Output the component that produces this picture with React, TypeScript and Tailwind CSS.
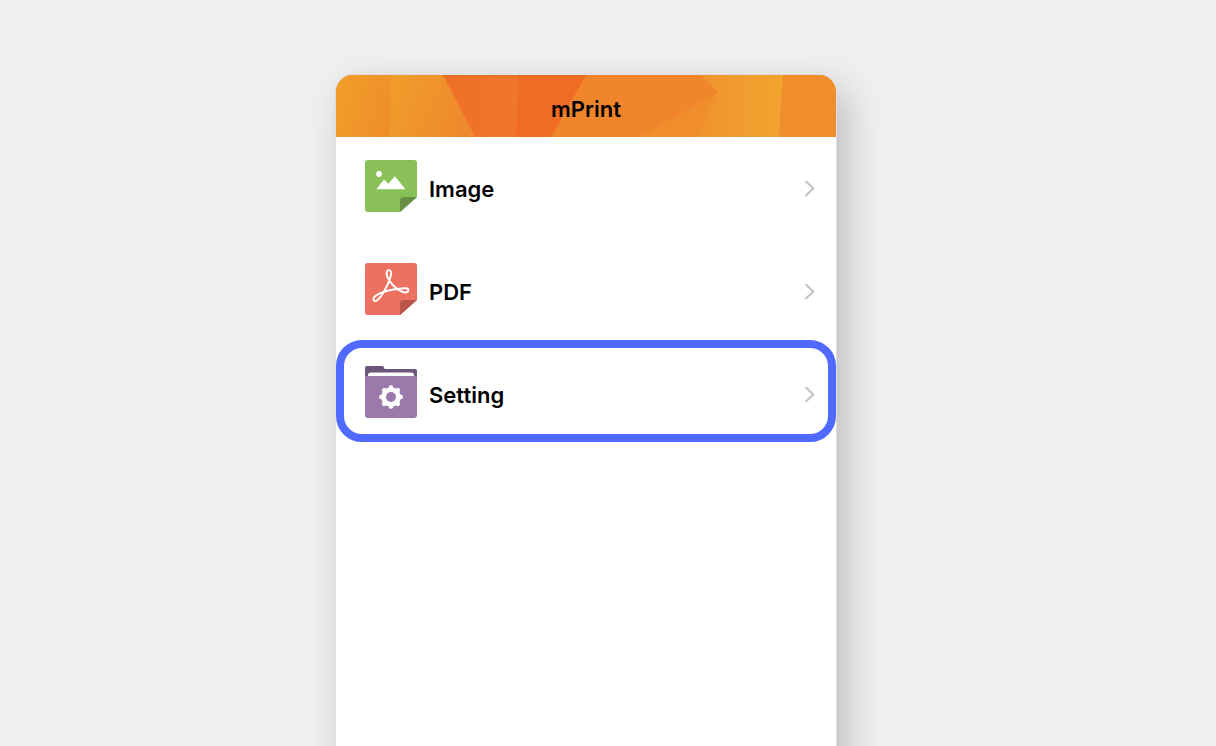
import type { ReactNode } from "react";

function HeaderArt() {
  return (
    <svg
      className="absolute inset-0 h-full w-full"
      viewBox="0 0 500 62"
      preserveAspectRatio="none"
      aria-hidden="true"
    >
      <defs>
        <linearGradient id="edge" x1="0" y1="0" x2="1" y2="0.3">
          <stop offset="0" stopColor="#f19f29" />
          <stop offset="1" stopColor="#f08f2a" />
        </linearGradient>
        <linearGradient id="amber" x1="0" y1="0" x2="1" y2="0.3">
          <stop offset="0" stopColor="#f09e2b" />
          <stop offset="1" stopColor="#ef8a2c" />
        </linearGradient>
        <linearGradient id="gold" x1="0" y1="0" x2="1" y2="0">
          <stop offset="0" stopColor="#f0932e" />
          <stop offset="1" stopColor="#f1a42f" />
        </linearGradient>
        <linearGradient id="flame" x1="0" y1="0" x2="1" y2="0">
          <stop offset="0" stopColor="#ef6f28" />
          <stop offset="1" stopColor="#f2762a" />
        </linearGradient>
      </defs>
      <rect width="500" height="62" fill="#f0852c" />
      <path d="M0 0H55L53 62H0Z" fill="url(#edge)" />
      <path d="M55 0H107L139 62H53Z" fill="url(#amber)" />
      <path d="M107 0H182L180 62H139Z" fill="url(#flame)" />
      <path d="M182 0H250L215 62H180Z" fill="#f06c25" />
      <path d="M382 17L304 62H362Z" fill="#f08e2e" />
      <path d="M365 0H447L443 62H361L382 17Z" fill="url(#gold)" />
      <path d="M447 0H500V62H443Z" fill="#f08e2c" />
    </svg>
  );
}

function ImageIcon() {
  return (
    <svg className="h-[52px] w-[52px]" viewBox="0 0 52 52" aria-hidden="true">
      <path d="M3 0H49Q52 0 52 3V37L35 52H3Q0 52 0 49V3Q0 0 3 0Z" fill="#89c057" />
      <path d="M52 37H39Q35 37 35 41V52Z" fill="#659044" />
      <circle cx="14" cy="14" r="2.9" fill="#fff" />
      <path d="M11.3 29.2L19 19.5L23.4 23.8L29.8 16.3L40.5 29.2Z" fill="#fff" />
    </svg>
  );
}

function PdfIcon() {
  return (
    <svg className="h-[52px] w-[52px]" viewBox="0 0 52 52" aria-hidden="true">
      <path d="M3 0H49Q52 0 52 3V37L35 52H3Q0 52 0 49V3Q0 0 3 0Z" fill="#ed7161" />
      <path d="M52 37H39Q35 37 35 41V52Z" fill="#b9574b" />
      <path
        d="M24 7.3C21.3 7.3 20.9 11 22.6 14.4C25.6 20.3 30.6 25.8 36.8 28.6C40.4 30.2 43.4 29.2 43.4 27.2C43.4 25 40 25 36 25.5C28.5 26.2 20.5 28 14.2 30.6C10 32.4 7.6 35.4 8.8 37.4C10.1 39.4 13.8 36.6 16.4 32.7C20.7 26.2 24 19.5 25.6 13.6C26.6 10 26.4 7.3 24 7.3Z"
        fill="none"
        stroke="#fff"
        strokeWidth="2"
        strokeLinejoin="round"
      />
    </svg>
  );
}

function SettingIcon() {
  return (
    <svg className="h-[52px] w-[52px]" viewBox="0 0 52 52" aria-hidden="true">
      <path d="M0 14V2Q0 0 2 0H17Q19 0 19.5 3H50Q52 3 52 5V14Z" fill="#6c567b" />
      <path d="M3 12V9Q3 6.5 6 6.5H46Q49 6.5 49 9V12Z" fill="#fff" />
      <path d="M0 12Q0 10 2 10H50Q52 10 52 12V49Q52 52 49 52H3Q0 52 0 49Z" fill="#9b7aab" />
      <g transform="translate(26 31)">
        <g fill="#fff">
          <rect x="-2.2" y="-11.8" width="4.4" height="23.6" rx="1.8" />
          <rect x="-2.2" y="-11.8" width="4.4" height="23.6" rx="1.8" transform="rotate(45)" />
          <rect x="-2.2" y="-11.8" width="4.4" height="23.6" rx="1.8" transform="rotate(90)" />
          <rect x="-2.2" y="-11.8" width="4.4" height="23.6" rx="1.8" transform="rotate(135)" />
          <circle r="9.8" />
        </g>
        <circle r="5" fill="#9b7aab" />
      </g>
    </svg>
  );
}

function Chevron() {
  return (
    <svg className="ml-auto h-4 w-3" viewBox="0 0 12 16" fill="none" aria-hidden="true">
      <path d="M2.2 0.7L9.2 7.5L2.2 14.3" stroke="#c5c5c7" strokeWidth="2.3" strokeLinecap="round" />
    </svg>
  );
}

function MenuRow({
  label,
  icon,
  highlighted = false,
}: {
  label: string;
  icon: ReactNode;
  highlighted?: boolean;
}) {
  return (
    <li className="relative">
      <button type="button" className="flex h-[103px] w-full items-center pr-5 pl-[29px] text-left">
        <span className="mr-3 mb-[5px] shrink-0">{icon}</span>
        <span className="text-[22px] leading-7 font-semibold">{label}</span>
        <Chevron />
      </button>
      {highlighted && (
        <span className="pointer-events-none absolute inset-x-0 -top-[3px] bottom-1 rounded-[26px] border-8 border-[#5069ff]" />
      )}
    </li>
  );
}

export default function App() {
  return (
    <div className="flex h-screen justify-center overflow-hidden bg-[#efeff1] pt-[75px] font-['Inter',sans-serif] text-black">
      <main className="mr-11 -mb-20 flex w-full max-w-[500px] flex-col rounded-t-[17px] bg-white shadow-[0_0_0_1px_#dedee0,10px_14px_36px_rgba(0,0,0,0.22)]">
        <header className="relative flex h-[62px] shrink-0 items-center justify-center overflow-hidden rounded-t-[17px]">
          <HeaderArt />
          <h1 className="relative pt-1.5 text-[22px] leading-7 font-semibold">mPrint</h1>
        </header>
        <ul>
          <MenuRow label="Image" icon={<ImageIcon />} />
          <MenuRow label="PDF" icon={<PdfIcon />} />
          <MenuRow label="Setting" icon={<SettingIcon />} highlighted />
        </ul>
      </main>
    </div>
  );
}
